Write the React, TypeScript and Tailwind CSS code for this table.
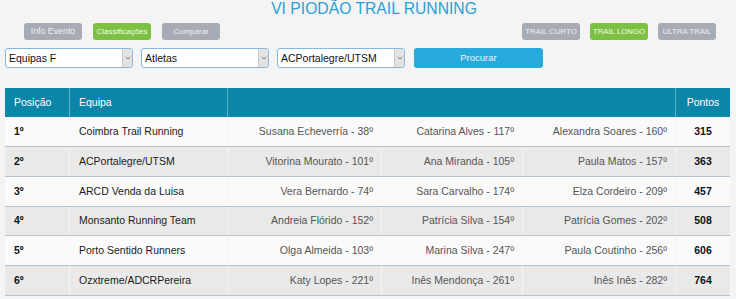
import React from "react";

const rows = [
  { pos: "1º", team: "Coimbra Trail Running", a: "Susana Echeverría - 38º", b: "Catarina Alves - 117º", c: "Alexandra Soares - 160º", pts: "315", h: "h-[29px]" },
  { pos: "2º", team: "ACPortalegre/UTSM", a: "Vitorina Mourato - 101º", b: "Ana Miranda - 105º", c: "Paula Matos - 157º", pts: "363", h: "h-[30px]" },
  { pos: "3º", team: "ARCD Venda da Luisa", a: "Vera Bernardo - 74º", b: "Sara Carvalho - 174º", c: "Elza Cordeiro - 209º", pts: "457", h: "h-[30px]" },
  { pos: "4º", team: "Monsanto Running Team", a: "Andreia Flórido - 152º", b: "Patrícia Silva - 154º", c: "Patrícia Gomes - 202º", pts: "508", h: "h-[29px]" },
  { pos: "5º", team: "Porto Sentido Runners", a: "Olga Almeida - 103º", b: "Marina Silva - 247º", c: "Paula Coutinho - 256º", pts: "606", h: "h-[30px]" },
  { pos: "6º", team: "Ozxtreme/ADCRPereira", a: "Katy Lopes - 221º", b: "Inês Mendonça - 261º", c: "Inês Inês - 282º", pts: "764", h: "h-[31px]" },
];

function Btn({ label, active, size }: { label: string; active?: boolean; size: string }) {
  return (
    <div
      className={
        "w-[58px] h-[17px] rounded-[3px] flex items-center justify-center leading-none whitespace-nowrap " +
        size +
        " " +
        (active ? "bg-[#7dc142] text-[#f4fbe9]" : "bg-[#a6abb5] text-[#eef0f3]")
      }
    >
      {label}
    </div>
  );
}

function Sel({ label }: { label: string }) {
  return (
    <div className="w-[128px] h-[20px] bg-white border border-[#86b7dc] rounded-[3px] flex items-stretch overflow-hidden">
      <div className="flex-1 flex items-center pl-[3px] text-[10.5px] text-[#111] leading-none">{label}</div>
      <div className="w-[10px] bg-[#e3e3e3] border-l border-[#c9c9c9] flex items-center justify-center">
        <svg width="6" height="4" viewBox="0 0 6 4">
          <path d="M0.8 0.8 L3 3 L5.2 0.8" fill="none" stroke="#666" strokeWidth="0.9" />
        </svg>
      </div>
    </div>
  );
}

export default function App() {
  const grid = "grid grid-cols-[64px_158px_154px_141px_153px_55px]";
  return (
    <div
      className="w-[736px] h-[299px] overflow-hidden bg-[#f4f4f4]"
      style={{ fontFamily: '"Liberation Sans", Arial, sans-serif' }}
    >
      <div className="h-[20px] mt-[-1px] pl-[12px] text-center text-[15.7px] leading-[20px] text-[#2a9fd6]">
        VI PIODÃO TRAIL RUNNING
      </div>
      <div className="mt-[4px] flex items-center justify-between pl-[24px] pr-[20px]">
        <div className="flex gap-[11px]">
          <Btn label="Info Evento" size="text-[8.8px]" />
          <Btn label="Classificações" active size="text-[8px]" />
          <Btn label="Comparar" size="text-[8px]" />
        </div>
        <div className="flex gap-[10px]">
          <Btn label="TRAIL CURTO" size="text-[7.8px]" />
          <Btn label="TRAIL LONGO" active size="text-[7.8px]" />
          <Btn label="ULTRA TRAIL" size="text-[7.8px]" />
        </div>
      </div>
      <div className="mt-[8px] pl-[5px] flex gap-[8px]">
        <Sel label="Equipas F" />
        <Sel label="Atletas" />
        <Sel label="ACPortalegre/UTSM" />
        <div className="ml-[1px] w-[129px] h-[20px] rounded-[3px] bg-[#27a9dc] flex items-center justify-center text-[9.5px] text-[#eaf6fc]">
          Procurar
        </div>
      </div>
      <div className="mt-[20px] ml-[5px] w-[725px]">
        <div className={grid + " h-[29px] bg-[#0b86a9] text-white text-[10.5px]"}>
          <div className="flex items-center pl-[9px]">Posição</div>
          <div className="flex items-center pl-[9px] border-l border-[#5fb0c8]">Equipa</div>
          <div className="col-span-3 border-l border-[#5fb0c8]" />
          <div className="flex items-center justify-center border-l border-[#5fb0c8]">Pontos</div>
        </div>
        {rows.map((r, i) => (
          <div
            key={r.pos}
            className={
              grid +
              " " +
              r.h +
              " text-[10.5px] " +
              (i > 0 ? "border-t border-[#b4c3d0] " : "") +
              (i === rows.length - 1 ? "border-b border-[#b4c3d0] " : "") +
              (i % 2 === 0 ? "bg-[#fafafa]" : "bg-[#e9e9e9]")
            }
          >
            <div className="flex items-center pl-[9px] font-bold text-[#111]">{r.pos}</div>
            <div className="flex items-center pl-[9px] text-[#1a1a1a] border-l border-[#f4f4f4]">{r.team}</div>
            <div className="flex items-center justify-end pr-[8px] text-[#555] border-l border-[#f4f4f4]">{r.a}</div>
            <div className="flex items-center justify-end pr-[8px] text-[#555] border-l border-[#f4f4f4]">{r.b}</div>
            <div className="flex items-center justify-end pr-[8px] text-[#555] border-l border-[#f4f4f4]">{r.c}</div>
            <div className="flex items-center justify-center font-bold text-[#111] border-l border-[#f4f4f4]">{r.pts}</div>
          </div>
        ))}
      </div>
    </div>
  );
}
